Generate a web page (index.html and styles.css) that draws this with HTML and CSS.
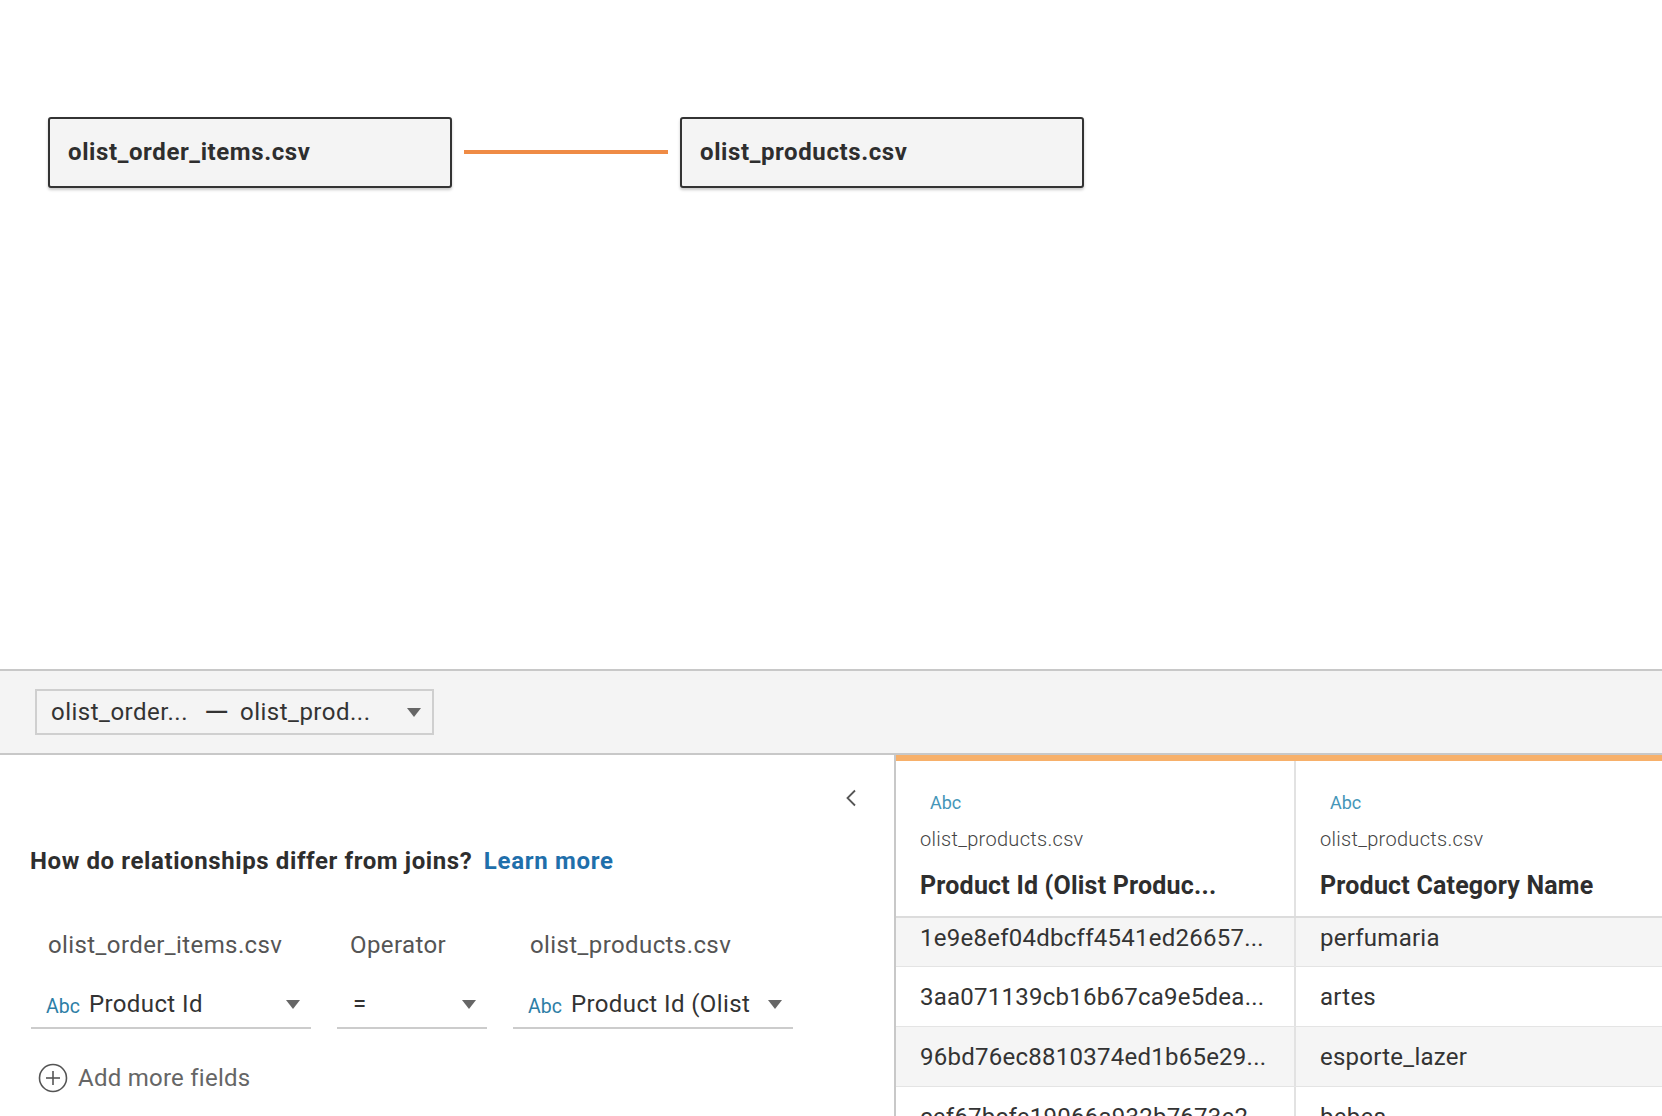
FILE: index.html
```html
<!DOCTYPE html>
<html>
<head>
<meta charset="utf-8">
<link rel="stylesheet" href="styles.css">
</head>
<body>
<div class="canvas">
  <div class="node">olist_order_items.csv</div>
  <div class="link"></div>
  <div class="node">olist_products.csv</div>
</div>
<div class="toolbar">
  <div class="picker">
    <span class="pick-a">olist_order...</span>
    <span class="pick-dash">—</span>
    <span class="pick-b">olist_prod...</span>
    <span class="caret"></span>
  </div>
</div>
<div class="bottom">
  <div class="left">
    <div class="collapse-row">
      <svg class="chev" width="12" height="18" viewBox="0 0 12 18"><polyline points="10,1.5 2.5,9 10,16.5" fill="none" stroke="#555" stroke-width="1.8"/></svg>
    </div>
    <div class="question">How do relationships differ from joins? <span class="learn">Learn more</span></div>
    <div class="fields">
      <div class="label l1">olist_order_items.csv</div>
      <div class="label l2">Operator</div>
      <div class="label l3">olist_products.csv</div>
      <div class="field f1"><span class="abc">Abc</span><span class="fv">Product Id</span><span class="caret"></span></div>
      <div class="field f2"><span class="fv eq">=</span><span class="caret"></span></div>
      <div class="field f3"><span class="abc">Abc</span><span class="fv">Product Id (Olist</span><span class="caret"></span></div>
    </div>
    <div class="add">
      <svg width="30" height="30" viewBox="0 0 30 30"><circle cx="15" cy="15" r="13.5" fill="none" stroke="#555" stroke-width="1.6"/><line x1="15" y1="8" x2="15" y2="22" stroke="#555" stroke-width="1.6"/><line x1="8" y1="15" x2="22" y2="15" stroke="#555" stroke-width="1.6"/></svg>
      <span>Add more fields</span>
    </div>
  </div>
  <div class="table">
    <div class="thead">
      <div class="th">
        <div class="th-abc">Abc</div>
        <div class="th-src">olist_products.csv</div>
        <div class="th-name">Product Id (Olist Produc...</div>
      </div>
      <div class="th">
        <div class="th-abc">Abc</div>
        <div class="th-src">olist_products.csv</div>
        <div class="th-name">Product Category Name</div>
      </div>
    </div>
    <div class="tbody">
      <div class="rows">
        <div class="tr alt"><div class="td">1e9e8ef04dbcff4541ed26657...</div><div class="td">perfumaria</div></div>
        <div class="tr"><div class="td">3aa071139cb16b67ca9e5dea...</div><div class="td">artes</div></div>
        <div class="tr alt"><div class="td">96bd76ec8810374ed1b65e29...</div><div class="td">esporte_lazer</div></div>
        <div class="tr"><div class="td">cef67bcfe19066a932b7673e2...</div><div class="td">bebes</div></div>
      </div>
    </div>
  </div>
</div>
</body>
</html>
```
FILE: styles.css
```css
* { box-sizing: border-box; }
html, body { margin: 0; padding: 0; background: #fff; }
body {
  width: 1662px;
  height: 1116px;
  overflow: hidden;
  font-family: Roboto, "Liberation Sans", sans-serif;
  color: #333;
}
.canvas {
  height: 669px;
  display: flex;
  align-items: flex-start;
  padding: 117px 0 0 48px;
}
.node {
  width: 404px;
  height: 71px;
  background: #f4f4f4;
  border: 2px solid #333;
  border-radius: 3px;
  box-shadow: 0 2px 3px rgba(0,0,0,0.22);
  font-size: 24px;
  letter-spacing: 0.6px;
  font-weight: 700;
  display: flex;
  align-items: center;
  padding: 0 0 2px 18px;
  color: #2e2e2e;
}
.link {
  width: 204px;
  height: 4px;
  background: #ef8b45;
  margin: 33px 12px 0 12px;
}
.toolbar {
  height: 86px;
  background: #f4f4f4;
  border-top: 2px solid #c8c8c8;
  border-bottom: 2px solid #c8c8c8;
  padding: 18px 0 0 35px;
}
.picker {
  width: 399px;
  height: 46px;
  border: 2px solid #cfcfcf;
  display: flex;
  align-items: center;
  padding-left: 14px;
  font-size: 24px;
  letter-spacing: 0.5px;
  color: #333;
}
.pick-dash { margin: 0 11px 0 16px; font-size: 32px; letter-spacing: 0; }
.picker .caret { margin-left: auto; margin-right: 11px; }
.caret {
  width: 0; height: 0;
  border-left: 7.5px solid transparent;
  border-right: 7.5px solid transparent;
  border-top: 9px solid #666;
  flex: none;
}
.bottom {
  display: flex;
  height: 361px;
}
.left {
  width: 896px;
  flex: none;
  border-right: 2px solid #c8c8c8;
  padding-left: 30px;
}
.collapse-row {
  display: flex;
  justify-content: flex-end;
  padding-right: 37px;
  margin-top: 34px;
  height: 18px;
}
.question {
  margin-top: 39px;
  font-size: 24px;
  letter-spacing: 0.6px;
  font-weight: 700;
  line-height: 30px;
  color: #2e2e2e;
}
.learn { color: #1f6fab; margin-left: 5px; letter-spacing: 0.7px; }
.fields {
  margin-top: 54px;
  display: grid;
  grid-template-columns: 280px 150px 280px;
  column-gap: 26px;
  row-gap: 27px;
  margin-left: 1px;
}
.label {
  font-size: 24px;
  letter-spacing: 0.4px;
  line-height: 30px;
  color: #555;
  padding-left: 17px;
}
.l2 { padding-left: 13px; }
.field {
  height: 42px;
  border-bottom: 2px solid #cccccc;
  display: flex;
  align-items: center;
  padding: 0 11px 6px 15px;
}
.abc {
  font-size: 19.5px;
  color: #2d7ea6;
  margin-right: 9px;
  margin-top: 4px;
}
.fv { font-size: 24px; letter-spacing: 0.4px; color: #333; }
.eq { padding-left: 1px; }
.field .caret { margin-left: auto; }
.add {
  margin-top: 34px;
  display: flex;
  align-items: center;
  margin-left: 8px;
  font-size: 24px;
  letter-spacing: 0.25px;
  color: #666;
}
.add svg { margin-right: 10px; }
.table {
  flex: 1;
  display: flex;
  flex-direction: column;
  overflow: hidden;
}
.thead {
  display: flex;
  border-top: 6px solid #f7b06a;
  border-bottom: 2px solid #dcdcdc;
  height: 163px;
}
.th {
  width: 400px;
  flex: none;
  border-right: 2px solid #e2e2e2;
  padding: 29px 0 0 24px;
}
.th:last-child { border-right: none; flex: 1; }
.th-abc {
  font-size: 18px;
  color: #4596b8;
  padding-left: 10px;
  line-height: 26px;
}
.th-src {
  margin-top: 10px;
  font-size: 20px;
  letter-spacing: 0.3px;
  font-weight: 300;
  color: #444;
  line-height: 26px;
}
.th-name {
  margin-top: 19px;
  font-size: 25px;
  letter-spacing: 0.2px;
  font-weight: 700;
  color: #2e2e2e;
  line-height: 30px;
}
.tbody { flex: 1; overflow: hidden; }
.rows { margin-top: -9px; }
.tr {
  display: flex;
  height: 60px;
  border-bottom: 1px solid #e4e4e4;
  background: #fff;
}
.tr:first-child { height: 58px; }
.tr.alt { background: #f5f5f5; }
.td {
  width: 400px;
  flex: none;
  border-right: 2px solid #e2e2e2;
  padding-left: 24px;
  display: flex;
  align-items: center;
  font-size: 24px;
  letter-spacing: 0.25px;
  color: #333;
}
.td:last-child { border-right: none; flex: 1; }
```
